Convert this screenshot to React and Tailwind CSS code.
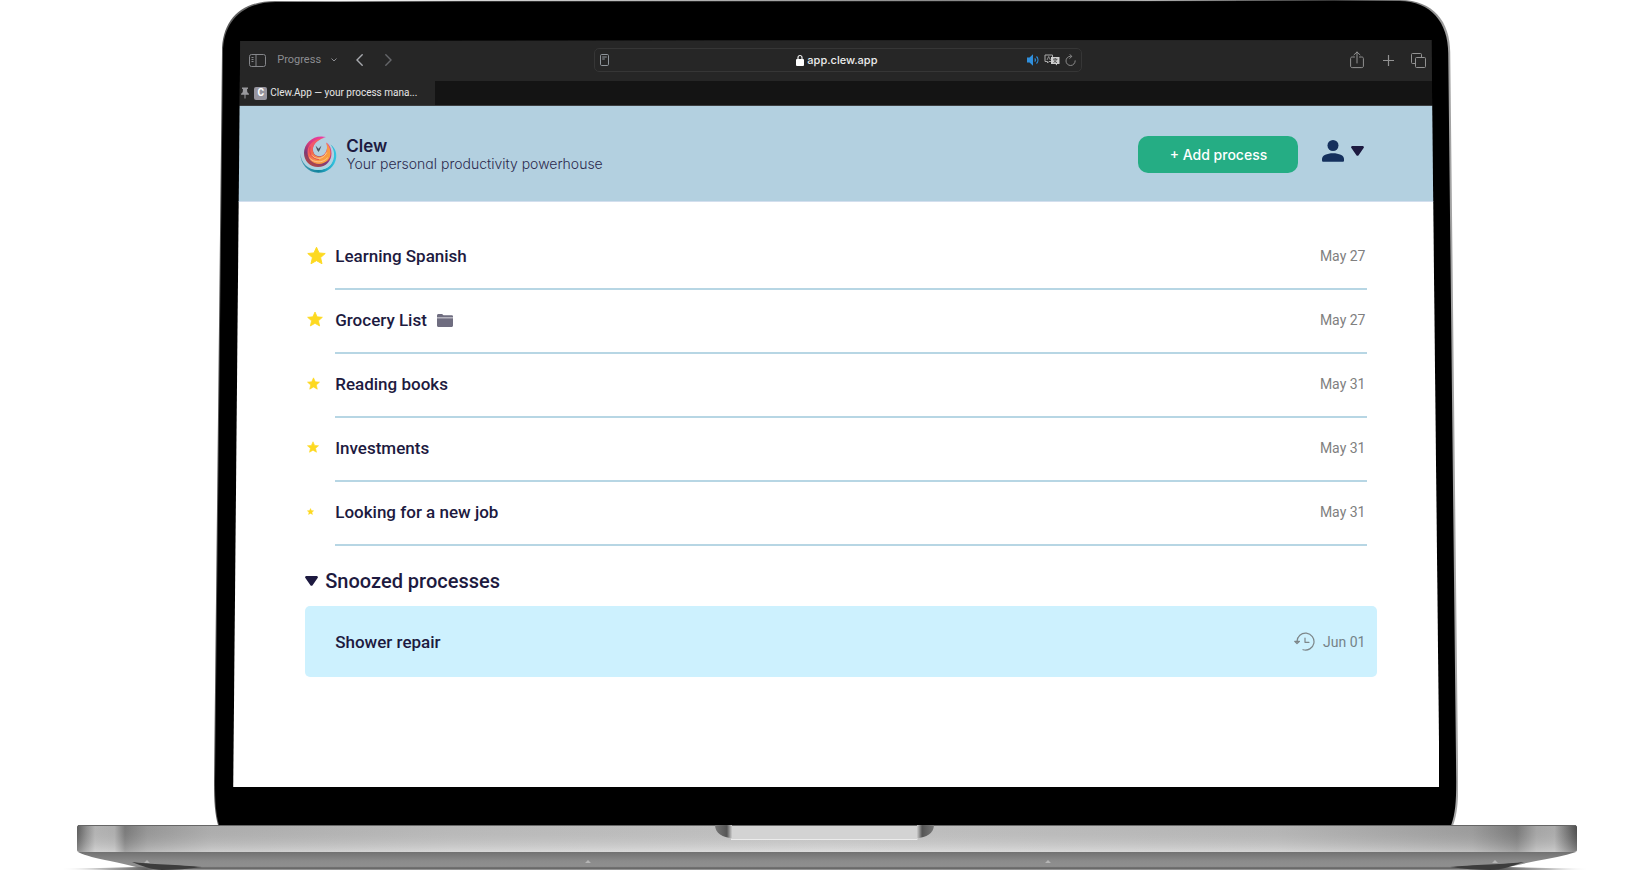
import React, { useState } from "react";

const processes = [
  { id: 1, title: "Learning Spanish", date: "May 27", star: "size-[19px]" },
  { id: 2, title: "Grocery List", date: "May 27", star: "size-4", folder: true },
  { id: 3, title: "Reading books", date: "May 31", star: "size-[13px]" },
  { id: 4, title: "Investments", date: "May 31", star: "size-[12px]" },
  { id: 5, title: "Looking for a new job", date: "May 31", star: "size-[7px]" },
];

const snoozed = [{ id: 6, title: "Shower repair", date: "Jun 01" }];

function StarIcon({ className }) {
  return (
    <svg viewBox="0 0 20 19" className={className} fill="#fdd921" stroke="#fdd921" strokeWidth="1" strokeLinejoin="round" aria-hidden="true">
      <path d="M10 .8l2.700 6 6.500.6-4.900 4.300 1.500 6.500L10 14.900l-5.800 3.300 1.500-6.500L.8 7.400l6.500-.6z" />
    </svg>
  );
}

function CaretIcon({ className }) {
  return (
    <svg viewBox="0 0 13 10" className={className} fill="#1d1a40" aria-hidden="true">
      <path d="M1.500 0h10c1.200 0 1.800 1.200 1.100 2.100L7.600 9.200c-.6.8-1.600.8-2.200 0L.4 2.100C-.3 1.200.3 0 1.500 0z" />
    </svg>
  );
}

function FolderIcon() {
  return (
    <svg viewBox="0 0 16 13" className="h-[13px] w-4" fill="#6f6d80" aria-label="Folder">
      <path d="M0 1.500C0 .6.6 0 1.500 0h3.600l1.400 1.200h8c.9 0 1.500.5 1.500 1.300v.9H0z" />
      <path d="M0 4.300h16v7.200c0 .9-.6 1.500-1.500 1.500h-13C.6 13 0 12.400 0 11.500z" />
    </svg>
  );
}

function SnoozeIcon() {
  return (
    <svg viewBox="0 0 21 19" className="h-[19px] w-[21px]" fill="none" stroke="#7d8689" strokeWidth="1.200" strokeLinecap="round" strokeLinejoin="round" aria-hidden="true">
      <path d="M3 9.500a8.500 8.500 0 1 1 6 8.200" />
      <path d="M.7 9.300h4.800L3 11.500z" />
      <path d="M11 6v4.300h4" />
    </svg>
  );
}

function Logo() {
  return (
    <svg viewBox="0 0 37 37" className="size-[37px]" aria-hidden="true">
      <defs>
        <linearGradient id="teal" x1="0" y1="0" x2="1" y2="0">
          <stop offset="0" stopColor="#4a9db5" />
          <stop offset=".5" stopColor="#12839d" />
          <stop offset="1" stopColor="#35c8e6" />
        </linearGradient>
        <linearGradient id="flame" x1=".8" y1="0" x2=".3" y2="1">
          <stop offset="0" stopColor="#f23cae" />
          <stop offset=".45" stopColor="#d23a78" />
          <stop offset=".7" stopColor="#7d3a78" />
          <stop offset="1" stopColor="#b8473f" />
        </linearGradient>
        <linearGradient id="ember" x1=".1" y1="0" x2=".9" y2=".8">
          <stop offset="0" stopColor="#f0428f" />
          <stop offset=".4" stopColor="#f3694f" />
          <stop offset=".7" stopColor="#f8954a" />
          <stop offset="1" stopColor="#f9a03a" />
        </linearGradient>
      </defs>
      <path fill="url(#teal)" d="M.3 17C1 27 8 34 18 34c11 0 17-8 16-17-.4-3.500-1.500-6-3.500-8.500 4.500 3.200 6.300 8 5.700 13-1 9-9 15.500-18 15.300C8 36.600 0 28 .3 17z" />
      <path fill="#a5d9e2" d="M2.500 21c2 7 8 11 16 11.500 7 .2 12.500-3.500 14.500-9-1.200 6.500-7 10.500-14.200 10.300C10.500 33.500 4.500 28.500 2.500 21z" />
      <path fill="url(#flame)" d="M26 1C14-2 4 7 4 17c0 8 6 14 14 14S31.500 25 31.500 17.500C31.500 13 30 9 26.500 6.500c1 4 1 8-2 11.500-3 3-8 3-10.500-.5C11 12 14 4 26 1z" />
      <path fill="url(#ember)" d="M24 2C14 2.500 7.500 8.500 7.500 16c0 7 5 12 11.500 12s12-5 11.500-11.500c-.3-4-1.500-7.500-4.500-10 1.700 5 1.300 9-1.500 12-3.500 3.500-9 2.500-11-1.500C11.500 12 14 5 24 2z" />
      <path fill="none" stroke="#fcd0a2" strokeWidth=".8" strokeLinecap="round" d="M11.500 19c3.500 5 11.500 5 15-2M9.500 22c4 5 13 5.500 18 0" />
      <path fill="none" stroke="#dc3b52" strokeWidth=".8" strokeLinecap="round" d="M10 11c-1.500 7 2 12 8.500 12.500" />
      <path fill="#4c5863" d="M15.500 9.500l3 3.200 3-3.200-1.700 4.600-1.300 2-1.400-2.200z" />
    </svg>
  );
}

function BrowserToolbar() {
  return (
    <div className="flex h-[41px] items-center bg-[#262626] pb-px pl-4 pr-[13px] text-[#8e8e8e] [font-family:Roboto,sans-serif]">
      <div className="flex flex-1 items-center">
        <button type="button" aria-label="Show sidebar">
          <svg viewBox="0 0 17 13" className="h-[13px] w-[17px]" fill="none" stroke="#85868a">
            <rect x=".5" y=".5" width="16" height="12" rx="2" />
            <path d="M7 .5v12M2.500 3.500h2M2.500 5.500h2M2.500 7.500h2" />
          </svg>
        </button>
        <button type="button" className="ml-[11px] flex items-center gap-[10px] text-[11px] leading-4 text-[#8c8d91]">
          Progress
          <svg viewBox="0 0 6 4" className="h-1 w-[6px]" fill="none" stroke="currentColor">
            <path d="M.5.5L3 3 5.500.5" />
          </svg>
        </button>
        <button type="button" aria-label="Back" className="ml-[19px]">
          <svg viewBox="0 0 7 12" className="h-3 w-[7px]" fill="none" stroke="#a6a8ad" strokeWidth="1.400" strokeLinecap="round">
            <path d="M6.200.8L1 6l5.200 5.200" />
          </svg>
        </button>
        <button type="button" aria-label="Forward" className="ml-[22px]">
          <svg viewBox="0 0 7 12" className="h-3 w-[7px]" fill="none" stroke="#65666a" strokeWidth="1.400" strokeLinecap="round">
            <path d="M.8.8L6 6 .8 11.200" />
          </svg>
        </button>
      </div>

      <div className="flex h-6 w-[41.5%] items-center rounded-[5px] border border-[#363636] px-[5px]">
        <div className="flex flex-1">
          <svg viewBox="0 0 9 12" className="h-3 w-[9px]" fill="none" stroke="#8f959b" aria-hidden="true">
            <rect x=".5" y=".5" width="8" height="11" rx="1.200" />
            <path d="M2.200 3h4.600M2.200 5h2.600" />
          </svg>
        </div>
        <label className="flex items-center gap-[3px]">
          <svg viewBox="0 0 8 12" className="h-3 w-2" aria-hidden="true">
            <path d="M2 6V3.500a2 2 0 0 1 4 0V6" fill="none" stroke="#f0f0f0" strokeWidth="1.200" />
            <rect y="5" width="8" height="7" rx="1" fill="#fff" />
          </svg>
          <input
            type="text"
            aria-label="Address"
            defaultValue="app.clew.app"
            className="w-[72px] bg-transparent text-[11px] font-medium leading-4 text-[#ececec] outline-none [font-family:Inter,sans-serif]"
          />
        </label>
        <div className="flex flex-1 items-center justify-end gap-[5px]">
          <button type="button" aria-label="Mute tab">
            <svg viewBox="0 0 12 12" className="size-3" fill="none" stroke="#2f8fdd">
              <path d="M0 3.500h2.500L6 .3v11.400L2.500 8.500H0z" fill="#2f8fdd" stroke="none" />
              <path d="M7.800 4.300c.8 1 .8 2.400 0 3.400M9.500 2.500c1.900 2 1.900 5 0 7" strokeWidth="1.200" />
            </svg>
          </button>
          <button type="button" aria-label="Translate">
            <svg viewBox="0 0 16 12" className="h-3 w-4">
              <path d="M1 1h7.500v6.500H5L3.500 9V7.500H1z" fill="none" stroke="#aaa" />
              <path d="M3 6l1.700-3.500L6.400 6" fill="none" stroke="#aaa" strokeWidth=".8" />
              <path d="M7 3h8.500v7H13v1.500L11.500 10H7z" fill="#cfcfcf" />
              <path d="M9 5.200h4.500M11.200 4v1.200M9.500 8.500c1.500-.7 2.500-1.700 3-3M10 6.200c.6 1.200 1.500 2 3 2.400" fill="none" stroke="#333" strokeWidth=".8" />
            </svg>
          </button>
          <button type="button" aria-label="Reload">
            <svg viewBox="0 0 11 12" className="h-3 w-[11px]" fill="none" stroke="#8a8a8a" strokeLinecap="round">
              <path d="M6.500 2.300H5.500a4.600 4.600 0 1 0 4.700 4.500M4.800.5l2 1.900-2 2" />
            </svg>
          </button>
        </div>
      </div>

      <div className="flex flex-1 items-center justify-end">
        <button type="button" aria-label="Share">
          <svg viewBox="0 0 14 18" className="h-[18px] w-[14px]" fill="none" stroke="#929292" strokeLinecap="round" strokeLinejoin="round">
            <path d="M4.500 6H2.200C1.200 6 .6 6.600.6 7.500V15c0 1 .6 1.600 1.600 1.600h9.600c1 0 1.600-.6 1.600-1.600V7.500c0-.9-.6-1.500-1.600-1.500H9.500M7 12V1M4 3.800L7 1l3 2.800" />
          </svg>
        </button>
        <button type="button" aria-label="New tab" className="ml-[19px]">
          <svg viewBox="0 0 11 11" className="size-[11px]" stroke="#929292" strokeWidth="1.200">
            <path d="M5.500 0v11M0 5.500h11" />
          </svg>
        </button>
        <button type="button" aria-label="Tab overview" className="ml-[17px]">
          <svg viewBox="0 0 15 15" className="size-[15px]" fill="none" stroke="#929292">
            <rect x="4.500" y="4.500" width="10" height="10" rx="1" />
            <path d="M4.500 10.500h-3a1 1 0 0 1-1-1v-8a1 1 0 0 1 1-1h8a1 1 0 0 1 1 1v3" />
          </svg>
        </button>
      </div>
    </div>
  );
}

function TabStrip() {
  return (
    <div className="flex h-[25px] border-b border-[#3c3e40] bg-[#141414]">
      <button type="button" className="flex w-[202px] items-center bg-[#262626] pl-2 text-[10px] leading-4 text-[#e6e6e6] [font-family:Roboto,sans-serif]">
        <svg viewBox="0 0 8 12" className="h-3 w-2" fill="#98989c" aria-hidden="true">
          <path d="M1 .5h6v1.300l-1 .5.300 3C7.300 5.800 8 6.500 8 7.800H4.500V11L4 12l-.5-1V7.800H0c0-1.300.7-2 1.700-2.500l.3-3-1-.5z" />
        </svg>
        <span className="ml-[5px] flex size-[13px] items-center justify-center rounded-[2px] bg-[#96949e] text-[10px] font-bold text-white">C</span>
        <span className="ml-[3px]">Clew.App — your process mana...</span>
      </button>
    </div>
  );
}

function AppHeader() {
  return (
    <header className="flex h-24 items-center justify-between border-b border-[#d3dfee] bg-[#b3d0e0] pl-[67px] pr-[75px] pt-[2px] [font-family:Inter,sans-serif] [font-feature-settings:'cv11']">
      <div className="flex items-center gap-[9px]">
        <Logo />
        <div>
          <h1 className="text-[17px] font-semibold leading-[18px] text-[#1d1a40]">Clew</h1>
          <p className="text-sm font-light leading-[18px] text-[#2c2b4e]">Your personal productivity powerhouse</p>
        </div>
      </div>
      <div className="flex items-center">
        <button type="button" className="h-[37px] w-40 rounded-[10px] bg-[#25ad84] text-sm font-medium text-white">
          + Add process
        </button>
        <button type="button" aria-label="Account" className="ml-6 flex items-center gap-[7px] pb-2">
          <svg viewBox="0 0 22 22" className="size-[22px]" fill="#15305d" aria-hidden="true">
            <circle cx="11" cy="5.500" r="5.500" />
            <path d="M0 19c0-3.500 5-5.700 11-5.700S22 15.500 22 19v1.200c0 1-.5 1.500-1.500 1.500h-19C.5 21.700 0 21.200 0 20.200z" />
          </svg>
          <CaretIcon className="h-[10px] w-[13px]" />
        </button>
      </div>
    </header>
  );
}

function ProcessRow({ process }) {
  return (
    <li className="flex h-16 items-stretch pr-[10px]">
      <div className="flex w-[30px] items-center pb-[6px] pl-[2px]">
        <StarIcon className={process.star} />
      </div>
      <div className="flex flex-1 items-center border-b-2 border-[#b7d6e4] pb-[2px]">
        <span className="text-[17px] font-medium leading-6 text-[#1d1a40]">{process.title}</span>
        {process.folder && (
          <span className="ml-[10px]">
            <FolderIcon />
          </span>
        )}
        <time className="ml-auto pr-[2px] text-sm text-[#808080]">{process.date}</time>
      </div>
    </li>
  );
}

function ProcessList() {
  const [open, setOpen] = useState(true);

  return (
    <main className="bg-white pb-[110px] pl-[72px] pr-[62px] pt-6 [font-family:Roboto,sans-serif]">
      <ul>
        {processes.map((process) => (
          <ProcessRow key={process.id} process={process} />
        ))}
      </ul>
      <h2 className="mb-[11px] mt-[21px]">
        <button
          type="button"
          aria-expanded={open}
          onClick={() => setOpen(!open)}
          className="flex items-center gap-[7px] text-xl font-medium leading-7 text-[#1d1a40]"
        >
          <CaretIcon className="h-[10px] w-[13px]" />
          Snoozed processes
        </button>
      </h2>
      {open && (
        <ul>
          {snoozed.map((item) => (
            <li key={item.id} className="flex h-[71px] items-center rounded-[5px] bg-[#cdf1fe] pl-[30px] pr-3">
              <span className="text-[17px] font-medium leading-6 text-[#1d1a40]">{item.title}</span>
              <div className="ml-auto flex items-center gap-2">
                <SnoozeIcon />
                <time className="text-sm text-[#758388]">{item.date}</time>
              </div>
            </li>
          ))}
        </ul>
      )}
    </main>
  );
}

function LidShape() {
  return (
    <svg viewBox="0 0 1244 825" preserveAspectRatio="none" className="absolute inset-0 -z-10 h-full w-full" aria-hidden="true">
      <defs>
        <linearGradient id="rim" x1="0" y1="0" x2="1" y2="0">
          <stop offset="0" stopColor="#555" />
          <stop offset=".1" stopColor="#999" />
          <stop offset=".2" stopColor="#444" />
          <stop offset=".6" stopColor="#555" />
          <stop offset=".75" stopColor="#aaa" />
          <stop offset=".9" stopColor="#333" />
          <stop offset="1" stopColor="#aaa" />
        </linearGradient>
      </defs>
      <path fill="url(#rim)" d="M8 52C8 20 27 1 61 1L1186 0c33 0 50 22 50 52l8 730c0 20-1 32-5 43H4c-3-11-4-23-4-43z" />
      <path fill="#000" d="M9 53C9 21 29 2 62 2L1185 1c32 0 49 22 49 52l8 729c0 20-1 32-5 43H5c-3-11-4-23-4-43z" />
    </svg>
  );
}

function LaptopBase() {
  return (
    <svg viewBox="0 0 1648 58" preserveAspectRatio="none" className="block h-[58px] w-full" aria-hidden="true">
      <defs>
        <linearGradient id="deck" x1="0" y1="0" x2="1" y2="0">
          <stop offset="0" stopColor="#666" />
          <stop offset=".006" stopColor="#999" />
          <stop offset=".012" stopColor="#c4c4c4" />
          <stop offset=".025" stopColor="#bebebe" />
          <stop offset=".032" stopColor="#858585" />
          <stop offset=".047" stopColor="#a4a4a4" />
          <stop offset=".09" stopColor="#bdbdbd" />
          <stop offset=".25" stopColor="#cacaca" />
          <stop offset=".5" stopColor="#d2d2d2" />
          <stop offset=".8" stopColor="#c6c6c6" />
          <stop offset=".93" stopColor="#aaa" />
          <stop offset=".96" stopColor="#858585" />
          <stop offset=".973" stopColor="#b5b5b5" />
          <stop offset=".985" stopColor="#bbb" />
          <stop offset=".995" stopColor="#777" />
          <stop offset="1" stopColor="#555" />
        </linearGradient>
        <linearGradient id="sheen" x1="0" y1="0" x2="0" y2="1">
          <stop offset="0" stopColor="#000" stopOpacity=".08" />
          <stop offset="1" stopColor="#fff" stopOpacity=".25" />
        </linearGradient>
        <linearGradient id="under" x1="0" y1="0" x2="0" y2="1">
          <stop offset="0" stopColor="#717171" />
          <stop offset=".5" stopColor="#8b8b8b" />
          <stop offset=".8" stopColor="#8f8f8f" />
          <stop offset=".9" stopColor="#5c5c5c" />
          <stop offset="1" stopColor="#aaa" />
        </linearGradient>
        <linearGradient id="shadow" x1="0" y1="0" x2="1" y2="0">
          <stop offset="0" stopColor="#777" stopOpacity="0" />
          <stop offset=".06" stopColor="#555" />
          <stop offset=".94" stopColor="#555" />
          <stop offset="1" stopColor="#777" stopOpacity="0" />
        </linearGradient>
        <linearGradient id="notchLeft" x1="0" y1="0" x2="1" y2="0">
          <stop offset="0" stopColor="#777" />
          <stop offset=".7" stopColor="#555" />
          <stop offset="1" stopColor="#ccc" />
        </linearGradient>
        <linearGradient id="notchRight" x1="1" y1="0" x2="0" y2="0">
          <stop offset="0" stopColor="#777" />
          <stop offset=".7" stopColor="#555" />
          <stop offset="1" stopColor="#ccc" />
        </linearGradient>
      </defs>
      <path fill="url(#shadow)" d="M60 44l80-2h1365l85 2-40 1H110z" />
      <path fill="url(#under)" d="M78 27h1498c-12 4-25 6-40 9-20 4-35 9-62 9H162c-20 0-32-5-52-9-14-3-24-5-32-9z" />
      <path fill="#3c3c3c" d="M132 37c14 2 50 3 70 5-14 2-26 3-40 3-10 0-20-4-30-8zM1524 37c-14 2-56 3-74 5 14 2 26 3 40 3 12 0 22-4 34-8z" />
      <path fill="url(#deck)" d="M79 0h1495c2 0 3 1 3 2v23c0 1-1 2-3 2H79c-1 0-2-1-2-2V2c0-1 1-2 2-2z" />
      <path fill="url(#sheen)" d="M77 1h1500v26H77z" />
      <path fill="#666" d="M78 0h1498v1H78z" />
      <path fill="#d3d3d3" d="M731 1h187v14H731z" />
      <path fill="#ececec" d="M731 14h186v1H731z" />
      <path fill="url(#notchLeft)" d="M715 0h17v13c-9 0-17-5-17-13z" />
      <path fill="url(#notchRight)" d="M934 0h-17v13c9 0 17-5 17-13z" />
      <path fill="#b5b5b5" d="M144 38l3-3 3 3zM585 38l3-3 3 3zM1045 38l3-3 3 3zM1492 38l3-3 3 3z" />
    </svg>
  );
}

function App() {
  return (
    <div className="min-h-screen overflow-hidden bg-white">
      <div className="relative isolate ml-[13%] w-[75.5%] px-[19px] pb-[38px] pt-10">
        <LidShape />
        <div className="bg-[#262626] [clip-path:polygon(7px_1px,calc(100%_-_8px)_0,100%_100%,0_100%)]">
          <BrowserToolbar />
          <TabStrip />
          <AppHeader />
          <ProcessList />
        </div>
      </div>
      <LaptopBase />
    </div>
  );
}

export default App;
